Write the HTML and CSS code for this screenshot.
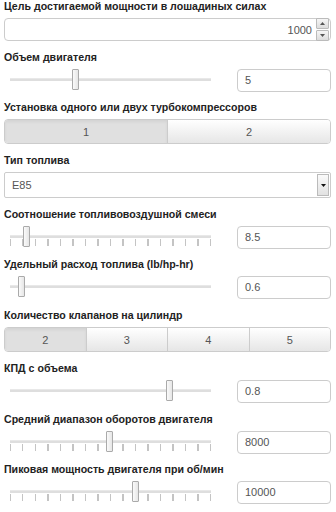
FILE: index.html
```html
<!DOCTYPE html>
<html lang="ru">
<head>
   <meta charset="UTF-8">
   <meta name="viewport" content="width=device-width, initial-scale=1.0">
   <title>Калькулятор турбины</title>
   <link rel="stylesheet" href="styles.css">
</head>
<body>
   <div class="calc">
      <div class="field">
         <label>Цель достигаемой мощности в лошадиных силах</label>
         <div class="num-input">
            <span class="num-value">1000</span>
            <span class="spinner">
               <span class="spin-btn"><svg width="5" height="3" viewBox="0 0 5 3"><path d="M0 3 L2.5 0 L5 3 Z" fill="#555"/></svg></span>
               <span class="spin-btn"><svg width="5" height="3" viewBox="0 0 5 3"><path d="M0 0 L5 0 L2.5 3 Z" fill="#555"/></svg></span>
            </span>
         </div>
      </div>

      <div class="field">
         <label>Объем двигателя</label>
         <div class="slider-row">
            <div class="slider">
               <div class="track"></div>
               <span class="handle" style="left: 62px"></span>
            </div>
            <div class="text-input">5</div>
         </div>
      </div>

      <div class="field">
         <label>Установка одного или двух турбокомпрессоров</label>
         <div class="btn-group">
            <button class="active">1</button>
            <button>2</button>
         </div>
      </div>

      <div class="field">
         <label>Тип топлива</label>
         <div class="select">
            <span class="select-value">E85</span>
            <span class="select-arrow"><svg width="5" height="3" viewBox="0 0 5 3"><path d="M0 0 L5 0 L2.5 3 Z" fill="#111"/></svg></span>
         </div>
      </div>

      <div class="field">
         <label>Соотношение топливовоздушной смеси</label>
         <div class="slider-row">
            <div class="slider">
               <div class="track"></div>
               <div class="ticks"></div>
               <span class="handle" style="left: 13px"></span>
            </div>
            <div class="text-input">8.5</div>
         </div>
      </div>

      <div class="field">
         <label>Удельный расход топлива (lb/hp-hr)</label>
         <div class="slider-row">
            <div class="slider">
               <div class="track"></div>
               <span class="handle" style="left: 8px"></span>
            </div>
            <div class="text-input">0.6</div>
         </div>
      </div>

      <div class="field">
         <label>Количество клапанов на цилиндр</label>
         <div class="btn-group">
            <button class="active">2</button>
            <button>3</button>
            <button>4</button>
            <button>5</button>
         </div>
      </div>

      <div class="field">
         <label>КПД с объема</label>
         <div class="slider-row">
            <div class="slider">
               <div class="track"></div>
               <span class="handle" style="left: 156px"></span>
            </div>
            <div class="text-input">0.8</div>
         </div>
      </div>

      <div class="field">
         <label>Средний диапазон оборотов двигателя</label>
         <div class="slider-row">
            <div class="slider">
               <div class="track"></div>
               <div class="ticks"></div>
               <span class="handle" style="left: 96px"></span>
            </div>
            <div class="text-input">8000</div>
         </div>
      </div>

      <div class="field">
         <label>Пиковая мощность двигателя при об/мин</label>
         <div class="slider-row">
            <div class="slider">
               <div class="track"></div>
               <div class="ticks"></div>
               <span class="handle" style="left: 122px"></span>
            </div>
            <div class="text-input">10000</div>
         </div>
      </div>
   </div>
</body>
</html>
```

FILE: styles.css
```css
body {
   font-family: "Liberation Sans", Arial, sans-serif;
   font-size: 11px;
   color: #222;
   background-color: #fff;
   margin: 0;
   padding: 0;
}

.calc {
   padding: 0 5px 0 4px;
}

.field {
   margin-bottom: 9.7px;
}

.field label {
   display: block;
   font-size: 10.6px;
   font-weight: bold;
   line-height: 13px;
   margin-bottom: 5px;
   white-space: nowrap;
}

/* number input with spinner */
.num-input {
   display: flex;
   align-items: center;
   height: 21px;
   border: 1px solid #ccc;
   border-radius: 4px;
   padding-right: 1px;
}

.num-value {
   flex: 1;
   text-align: right;
   color: #555;
   padding-right: 4px;
}

.spinner {
   display: flex;
   flex-direction: column;
   width: 13px;
   gap: 1px;
}

.spin-btn {
   display: flex;
   align-items: center;
   justify-content: center;
   height: 9px;
   border: 1px solid #bbb;
   border-radius: 1px;
   background: linear-gradient(#f6f6f6, #dcdcdc);
}

/* slider rows */
.slider-row {
   display: flex;
   align-items: flex-start;
   justify-content: space-between;
}

.slider {
   position: relative;
   width: 201px;
   height: 22px;
   margin-left: 6px;
}

.track {
   margin-top: 9px;
   height: 3px;
   background-color: #dedede;
   border-top: 1px solid #e8e8e8;
   box-sizing: border-box;
}

.ticks {
   margin-top: 1px;
   height: 7px;
   background: repeating-linear-gradient(to right, #c4c4c4 0 1px, transparent 1px 12.5px);
}

.handle {
   position: absolute;
   top: 0;
   width: 5px;
   height: 19px;
   border: 1px solid #aaa;
   border-radius: 1px;
   background: linear-gradient(to right, #fafafa, #e6e6e6);
}

.text-input {
   width: 85px;
   height: 21px;
   line-height: 21px;
   padding-left: 7px;
   border: 1px solid #ccc;
   border-radius: 4px;
   color: #555;
}

/* button groups */
.btn-group {
   display: flex;
   height: 23px;
   border: 1px solid #ccc;
   border-radius: 4px;
   overflow: hidden;
}

.btn-group button {
   flex: 1;
   font-family: inherit;
   font-size: 11px;
   color: #555;
   border: none;
   border-left: 1px solid #ccc;
   background: linear-gradient(#fff, #e6e6e6);
   padding: 0;
}

.btn-group button:first-child {
   border-left: none;
}

.btn-group button.active {
   background: #e0e0e0;
   box-shadow: inset 0 2px 3px rgba(0, 0, 0, 0.06);
}

/* select */
.select {
   display: flex;
   align-items: stretch;
   height: 24px;
   border: 1px solid #ccc;
   border-radius: 2px;
}

.select-value {
   flex: 1;
   line-height: 24px;
   padding-left: 7px;
   color: #555;
}

.select-arrow {
   display: flex;
   align-items: center;
   justify-content: center;
   width: 10px;
   margin: 1px;
   border: 1px solid #bbb;
   background: linear-gradient(#fafafa, #e2e2e2);
}
```
